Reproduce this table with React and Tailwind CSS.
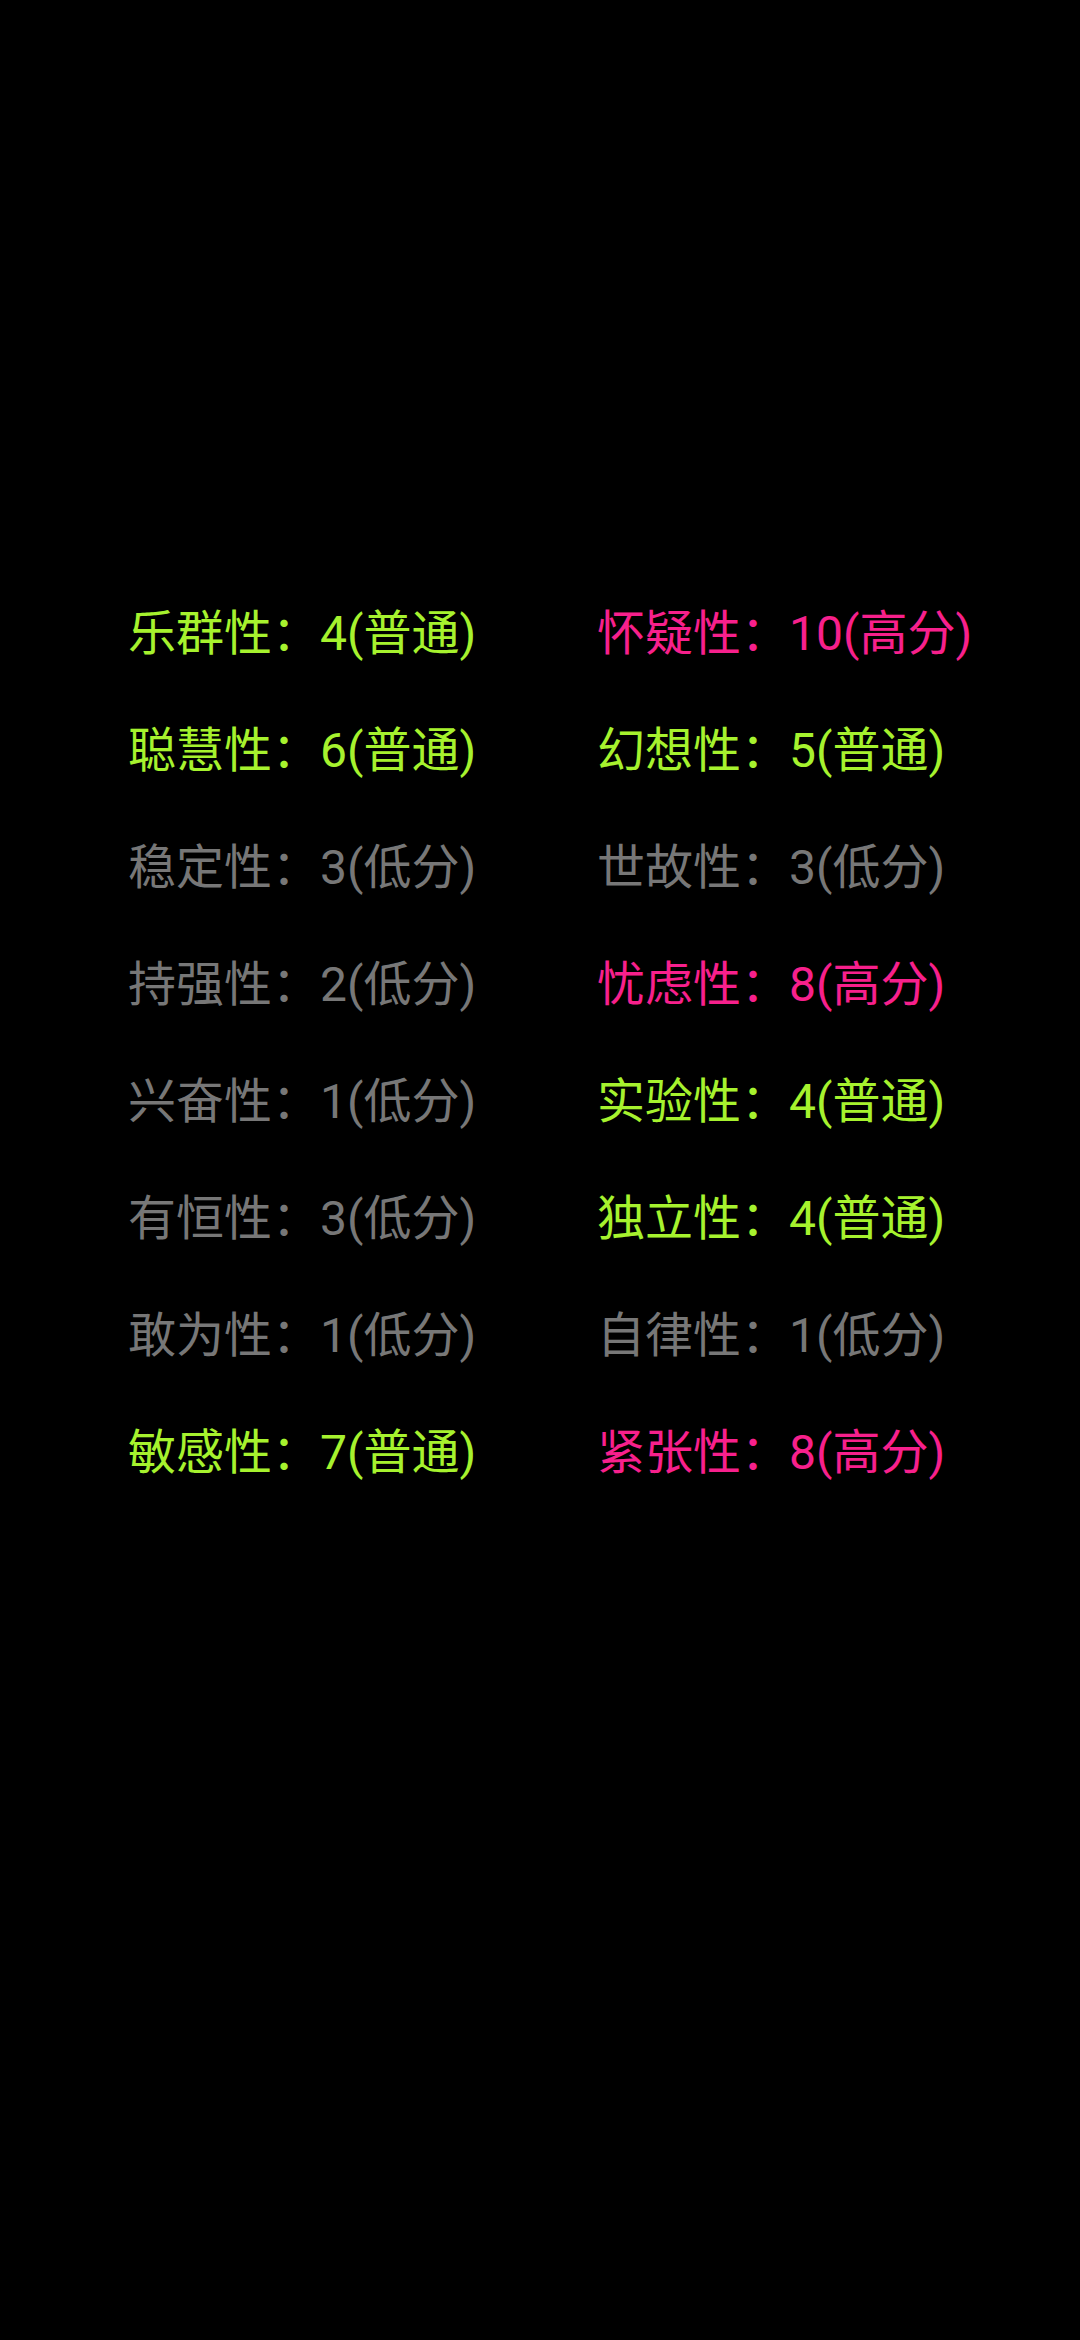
import React from 'react';

const Green = 'text-[#a6f22e]';
const Pink = 'text-[#f7208c]';
const Gray = 'text-[#777777]';

const items = [
  ['乐群性', '4(普通)', Green],
  ['怀疑性', '10(高分)', Pink],
  ['聪慧性', '6(普通)', Green],
  ['幻想性', '5(普通)', Green],
  ['稳定性', '3(低分)', Gray],
  ['世故性', '3(低分)', Gray],
  ['持强性', '2(低分)', Gray],
  ['忧虑性', '8(高分)', Pink],
  ['兴奋性', '1(低分)', Gray],
  ['实验性', '4(普通)', Green],
  ['有恒性', '3(低分)', Gray],
  ['独立性', '4(普通)', Green],
  ['敢为性', '1(低分)', Gray],
  ['自律性', '1(低分)', Gray],
  ['敏感性', '7(普通)', Green],
  ['紧张性', '8(高分)', Pink],
];

export default function App() {
  return (
    <div
      className="w-[1080px] h-[2340px] bg-black pt-[575px] pl-[128px]"
      style={{ fontFamily: "Roboto, 'Noto Sans CJK SC', sans-serif" }}
    >
      <div className="grid grid-cols-[469px_1fr]">
        {items.map(([name, score, color], i) => (
          <div key={i} className={`h-[117px] flex items-center text-[48px] leading-none whitespace-nowrap ${color}`}>
            {name}：{score}
          </div>
        ))}
      </div>
    </div>
  );
}
